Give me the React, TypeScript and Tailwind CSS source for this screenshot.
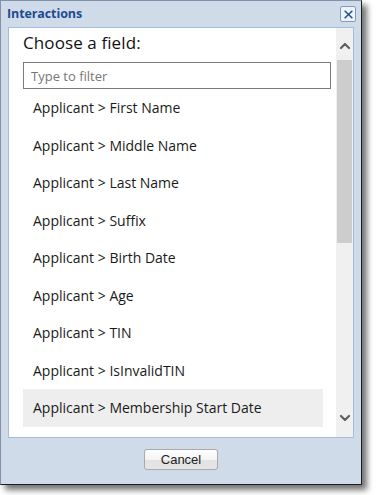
import { ChevronDown, ChevronUp } from 'lucide-react'

const fields = [
    'First Name',
    'Middle Name',
    'Last Name',
    'Suffix',
    'Birth Date',
    'Age',
    'TIN',
    'IsInvalidTIN',
    'Membership Start Date',
]

export default function App() {
    return (
        <div className="w-[378px] h-[495px] bg-white font-['Open_Sans',sans-serif]">
            <div className="relative w-[362px] h-[485px] bg-[#cfdbe8] border border-[#8092aa] border-r-[#1e1e1e] border-b-[#1e1e1e] shadow-[5px_5px_6px_rgba(0,0,0,0.55)] flex flex-col">
                <div className="h-[26px] flex items-center justify-between pl-[6px] pr-[5px]">
                    <span className="text-[12.5px] font-bold text-[#1d4b91] tracking-[-0.1px]">Interactions</span>
                    <button className="w-[16px] h-[16px] border border-[#7d9cc4] bg-[#eef3fa] rounded-[2px] flex items-center justify-center text-[#1d4b91]">
                        <svg width="11" height="11" viewBox="0 0 10 10"><path d="M1.5 1.5 L8.5 8.5 M8.5 1.5 L1.5 8.5" stroke="currentColor" strokeWidth="1.3" /></svg>
                    </button>
                </div>
                <div className="mx-[7px] h-[411px] bg-white border border-[#a6bdd7] flex">
                    <div className="flex-1 pl-[14px] pr-[5px] pt-[2px] overflow-hidden">
                        <div className="text-[17px] leading-[26px] text-[#111] h-[32px] tracking-[0.1px]">Choose a field:</div>
                        <input placeholder="Type to filter" className="w-full h-[27px] border border-[#7a7a7a] px-[7px] text-[13px] text-[#333] placeholder:text-[#777] outline-none" />
                        <div className="w-[300px]">
                            {fields.map(f => (
                                <div key={f} className={`h-[37.5px] flex items-center pl-[10px] text-[14px] text-[#1a1a1a] ${f === 'Membership Start Date' ? 'bg-[#eeeeee]' : ''}`}>
                                    Applicant &gt; {f}
                                </div>
                            ))}
                        </div>
                    </div>
                    <div className="w-[17px] bg-[#f0f0f0] flex flex-col items-center">
                        <div className="h-[32px] pt-[4px] flex items-center justify-center text-[#5f5f5f]"><ChevronUp size={16} strokeWidth={3.2} /></div>
                        <div className="w-[15px] h-[183px] bg-[#cdcdcd]" />
                        <div className="flex-1" />
                        <div className="h-[34px] pb-[4px] flex items-center justify-center text-[#5f5f5f]"><ChevronDown size={16} strokeWidth={3.2} /></div>
                    </div>
                </div>
                <div className="flex-1 flex justify-center pt-[11px]">
                    <button className="w-[74px] h-[21px] rounded-[3px] border border-[#a9a9a9] bg-[linear-gradient(#ffffff_0%,#f4f4f4_50%,#e2e2e2_51%,#e6e6e6_100%)] text-[13px] text-[#222] font-['Liberation_Sans',sans-serif] leading-[19px]">Cancel</button>
                </div>
            </div>
        </div>
    )
}
